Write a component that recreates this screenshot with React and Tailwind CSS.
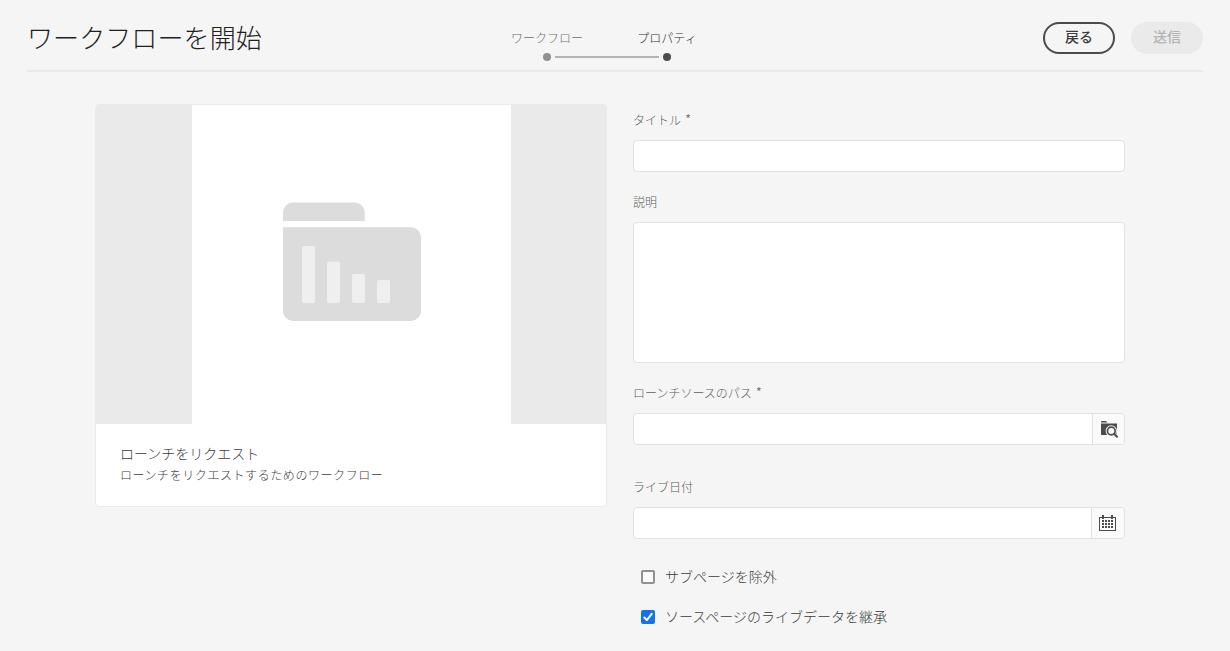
import React from 'react';

function StepHeader() {
  return (
    <div className="flex w-[240px] flex-col">
      <div className="grid grid-cols-2 text-center text-[12px] leading-[18px]">
        <span className="text-[#6e6e6e]">ワークフロー</span>
        <span className="text-[#323232]">プロパティ</span>
      </div>
      <div className="mt-[6px] flex items-center gap-1 px-14">
        <span className="size-2 rounded-full bg-[#909090]" />
        <span className="h-[2px] flex-1 bg-[#b3b3b3]" />
        <span className="size-2 rounded-full bg-[#4b4b4b]" />
      </div>
    </div>
  );
}

function FolderArt() {
  return (
    <svg width="138" height="120" viewBox="0 0 138 120" className="ml-[91px] mt-[97px] block">
      <path d="M0 19V10.500A10 10 0 0 1 10 .5H71.700A10 10 0 0 1 81.700 10.500V19Z" fill="#dcdcdc" />
      <path d="M0 25.300H128A10 10 0 0 1 138 35.300V109A10 10 0 0 1 128 119H10A10 10 0 0 1 0 109Z" fill="#dcdcdc" />
      <g fill="#efefef">
        <rect x="19" y="44" width="13" height="57" rx="2" />
        <rect x="44" y="59.500" width="13" height="41.500" rx="2" />
        <rect x="69" y="72" width="13" height="29" rx="2" />
        <rect x="94" y="78" width="13" height="23" rx="2" />
      </g>
    </svg>
  );
}

function FolderSearchIcon() {
  return (
    <svg width="18" height="18" viewBox="0 0 18 18">
      <path d="M1 2V1.500Q1 1 1.500 1H6L7.500 2.500H1Z" fill="#4b4b4b" />
      <path d="M1 3.500H17V15H1Z" fill="#4b4b4b" />
      <path d="M17.300 17.300L11.500 11.500" stroke="#fafafa" strokeWidth="4" />
      <circle cx="11.300" cy="11" r="5.700" fill="#fafafa" />
      <path d="M8 15H18V18H8Z" fill="#fafafa" />
      <circle cx="11.300" cy="11" r="3.900" fill="#fafafa" stroke="#4b4b4b" strokeWidth="1.700" />
      <path d="M14.100 13.800L17 16.700" stroke="#4b4b4b" strokeWidth="2" strokeLinecap="round" />
    </svg>
  );
}

function CalendarIcon() {
  return (
    <svg width="17" height="16" viewBox="0 0 17 16" fill="#4b4b4b" shapeRendering="crispEdges">
      <path d="M0 2H17V16H0ZM1 3V15H16V3Z" fillRule="evenodd" />
      <rect x="3" y="0" width="2" height="4" />
      <rect x="12" y="0" width="2" height="4" />
      {[5, 8, 11].map((y) =>
        [3, 6, 9, 12].map((x) => <rect key={`${x}-${y}`} x={x} y={y} width="2" height="2" />)
      )}
    </svg>
  );
}

function Label({ children, required }) {
  return (
    <div className="h-[18px] text-[12px] leading-[18px] text-[#5f5f5f]">
      {children}
      {required && <span className="ml-1 text-[14px] leading-none">*</span>}
    </div>
  );
}

export default function App() {
  return (
    <div className="h-[651px] w-[1230px] overflow-hidden bg-[#f5f5f5] px-[27px] font-['Noto_Sans_CJK_JP',sans-serif] font-light text-[#3c3c3c]">
      <header className="grid h-[72px] grid-cols-[460px_1fr_auto] border-b-2 border-[#eaeaea]">
        <h1 className="pt-[17px] text-[26.100px] leading-[40px] text-[#1f1f1f]">ワークフローを開始</h1>
        <div className="pt-[29px]">
          <StepHeader />
        </div>
        <div className="flex gap-4 pt-[22px]">
          <button className="h-8 w-[72px] rounded-full border-2 border-[#4b4b4b] pb-1 text-[14px] leading-none font-medium">戻る</button>
          <button disabled className="h-8 w-[72px] rounded-full bg-[#eaeaea] pb-1 text-[14px] leading-none font-medium text-[#b3b3b3]">送信</button>
        </div>
      </header>

      <main className="flex gap-[26px] pl-[68px] pt-8">
        <section className="h-[403px] w-[512px] overflow-hidden rounded border border-[#eaeaea] bg-white">
          <div className="flex h-[319px] justify-center bg-[#eaeaea]">
            <div className="ml-[1px] w-[319px] bg-white">
              <FolderArt />
            </div>
          </div>
          <div className="pl-[24px] pt-[18px]">
            <div className="text-[14px] leading-[22px]">ローンチをリクエスト</div>
            <div className="text-[12px] leading-[22px] tracking-[0.570px]">ローンチをリクエストするためのワークフロー</div>
          </div>
        </section>

        <form className="flex w-[492px] flex-col pt-[7px]">
          <Label required>タイトル</Label>
          <input className="mt-[11px] h-8 rounded border border-[#e1e1e1] bg-white" />
          <div className="mt-[21px]">
            <Label>説明</Label>
          </div>
          <textarea className="mt-[11px] h-[141px] resize-none rounded border border-[#e1e1e1] bg-white" />
          <div className="mt-[21px]">
            <Label required>ローンチソースのパス</Label>
          </div>
          <div className="mt-[11px] flex h-8 overflow-hidden rounded border border-[#e1e1e1] bg-white">
            <input className="min-w-0 flex-1" />
            <button type="button" className="flex w-8 items-center justify-center border-l border-[#e1e1e1] bg-[#fafafa]">
              <FolderSearchIcon />
            </button>
          </div>
          <div className="mt-[33px]">
            <Label>ライブ日付</Label>
          </div>
          <div className="mt-[11px] flex h-8 overflow-hidden rounded border border-[#e1e1e1] bg-white">
            <input className="min-w-0 flex-1" />
            <button type="button" className="flex w-[33px] items-center justify-start border-l border-[#e1e1e1] bg-[#fafafa] pl-[7px]">
              <CalendarIcon />
            </button>
          </div>
          <div className="mt-[26px] flex flex-col gap-4 pl-2 text-[14px] leading-[22px]">
            <label className="flex h-6 items-center gap-[10px]">
              <span className="size-[14px] rounded-[2px] border-2 border-[#909090] bg-[#fafafa]" />
              <span className="pb-0.5">サブページを除外</span>
            </label>
            <label className="flex h-6 items-center gap-[10px]">
              <svg width="14" height="14" viewBox="0 0 14 14">
                <rect width="14" height="14" rx="2" fill="#1473e6" />
                <path d="M3.300 7.500L5.900 10.100L10.700 3.800" fill="none" stroke="#fff" strokeWidth="2" strokeLinecap="round" strokeLinejoin="round" />
              </svg>
              <span className="pb-0.5">ソースページのライブデータを継承</span>
            </label>
          </div>
        </form>
      </main>
    </div>
  );
}
